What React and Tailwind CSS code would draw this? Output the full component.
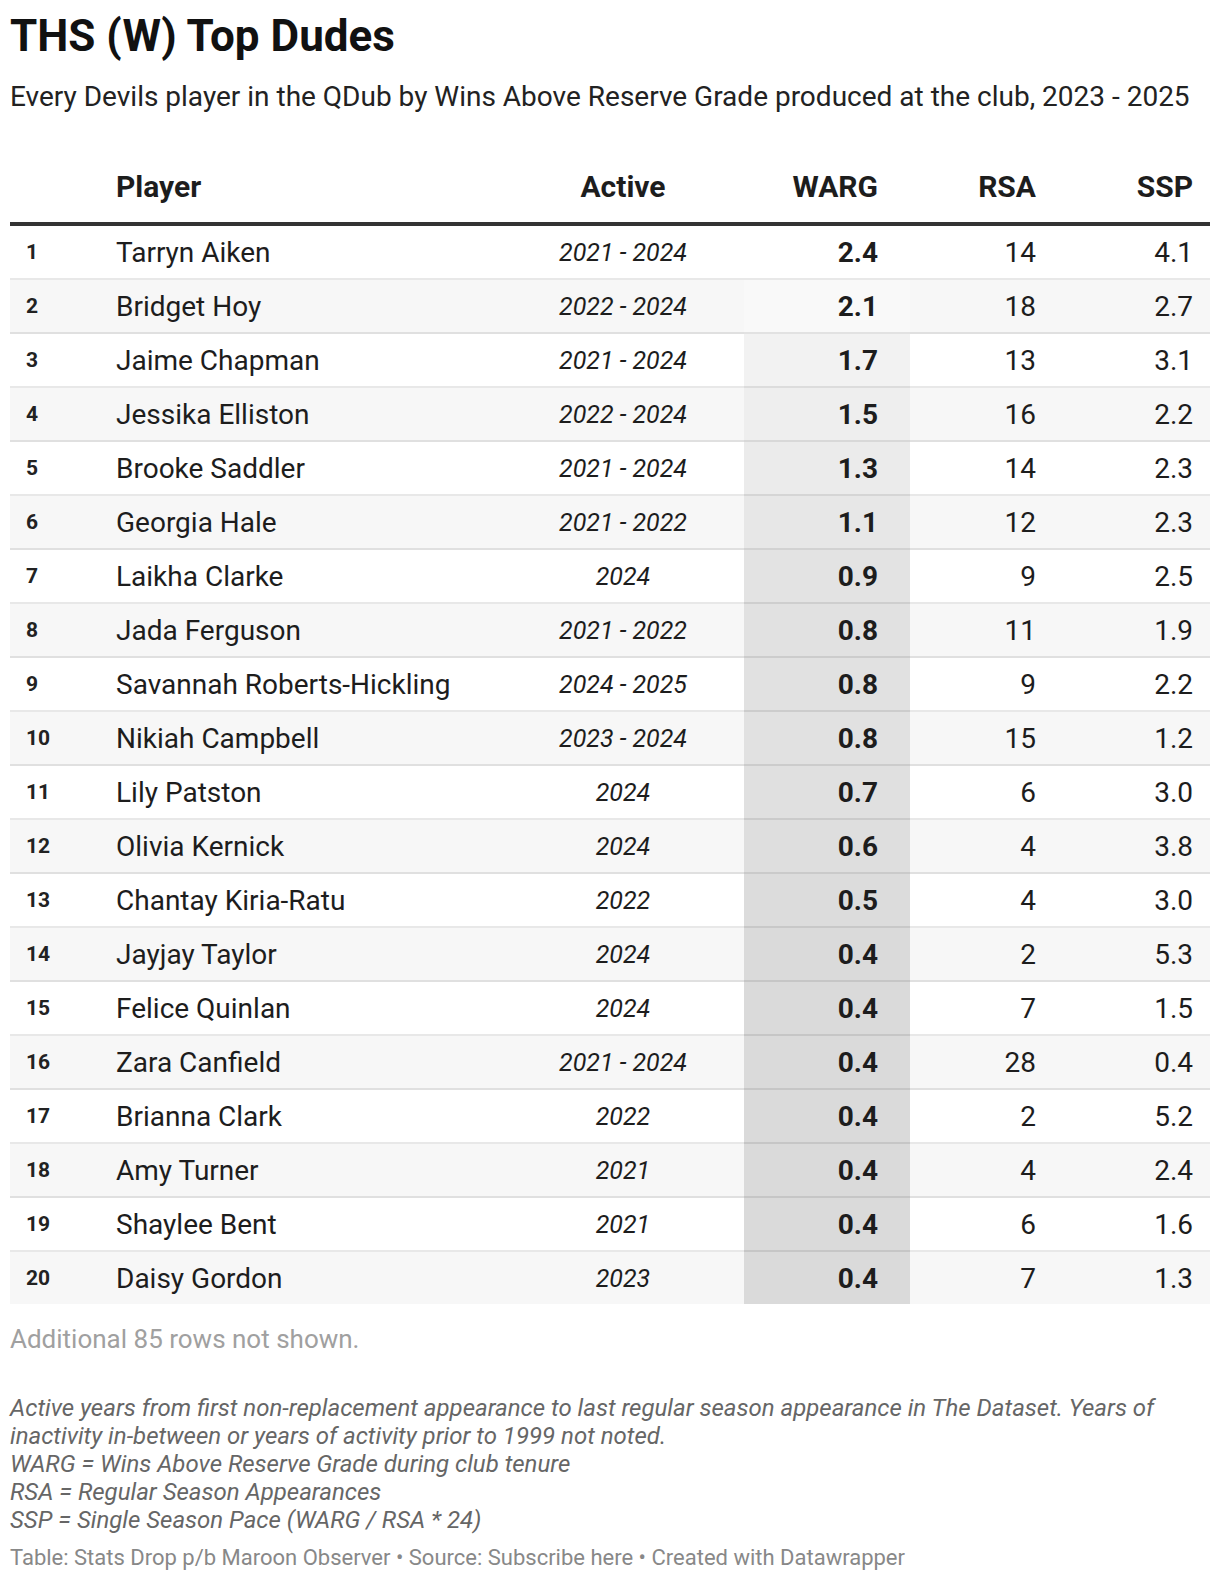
import React from "react";

const players = [
  ["Tarryn Aiken", "2021 - 2024", 2.4, 14, "4.1"],
  ["Bridget Hoy", "2022 - 2024", 2.1, 18, "2.7"],
  ["Jaime Chapman", "2021 - 2024", 1.7, 13, "3.1"],
  ["Jessika Elliston", "2022 - 2024", 1.5, 16, "2.2"],
  ["Brooke Saddler", "2021 - 2024", 1.3, 14, "2.3"],
  ["Georgia Hale", "2021 - 2022", 1.1, 12, "2.3"],
  ["Laikha Clarke", "2024", 0.9, 9, "2.5"],
  ["Jada Ferguson", "2021 - 2022", 0.8, 11, "1.9"],
  ["Savannah Roberts-Hickling", "2024 - 2025", 0.8, 9, "2.2"],
  ["Nikiah Campbell", "2023 - 2024", 0.8, 15, "1.2"],
  ["Lily Patston", "2024", 0.7, 6, "3.0"],
  ["Olivia Kernick", "2024", 0.6, 4, "3.8"],
  ["Chantay Kiria-Ratu", "2022", 0.5, 4, "3.0"],
  ["Jayjay Taylor", "2024", 0.4, 2, "5.3"],
  ["Felice Quinlan", "2024", 0.4, 7, "1.5"],
  ["Zara Canfield", "2021 - 2024", 0.4, 28, "0.4"],
  ["Brianna Clark", "2022", 0.4, 2, "5.2"],
  ["Amy Turner", "2021", 0.4, 4, "2.4"],
  ["Shaylee Bent", "2021", 0.4, 6, "1.6"],
  ["Daisy Gordon", "2023", 0.4, 7, "1.3"],
];

// heatmap: 2.4 -> white, 0.4 -> #dadada
const shade = (v) => {
  const c = Math.round(218 + ((v - 0.4) / 2.0) * 37);
  return `rgb(${c},${c},${c})`;
};

const cols = "grid grid-cols-[96px_396px_242px_166px_143px_157px]";

const App = () => {
  return (
    <div className="w-[1220px] bg-white px-[10px] pt-[10px] pb-[10px] font-[Roboto,sans-serif] text-[#1d1d1d]">
      <h1 className="text-[44px] leading-[52px] font-bold text-[#111]">THS (W) Top Dudes</h1>
      <p className="mt-[19px] text-[28px] leading-[32px] text-[#222]">
        Every Devils player in the QDub by Wins Above Reserve Grade produced at the club, 2023 - 2025
      </p>

      <div className="mt-[37px]">
        {/* header */}
        <div className={`${cols} h-[76px] border-b-4 border-[#333] text-[30px] leading-[36px] font-bold text-[#1d1d1d]`}>
          <div />
          <div className="flex items-end pb-[17px] pl-[10px]">Player</div>
          <div className="flex items-end justify-center pb-[17px]">Active</div>
          <div className="flex items-end justify-end pb-[17px] pr-[32px]">WARG</div>
          <div className="flex items-end justify-end pb-[17px] pr-[17px]">RSA</div>
          <div className="flex items-end justify-end pb-[17px] pr-[17px]">SSP</div>
        </div>

        {/* rows */}
        {players.map(([name, active, warg, rsa, ssp], i) => {
          const last = i === players.length - 1;
          const cell = last ? "h-[52px]" : "h-[54px] border-b-2 border-black/[0.09]";
          return (
            <div key={name} className={`${cols} ${i % 2 === 1 ? "bg-[#f7f7f7]" : "bg-white"}`}>
              <div className={`${cell} flex items-center pl-[16px] pt-[2px] text-[21px] font-bold text-[#222]`}>{i + 1}</div>
              <div className={`${cell} flex items-center pl-[10px] pt-[2px] text-[28px]`}>{name}</div>
              <div className={`${cell} flex items-center justify-center pt-[2px] text-[25px] italic`}>{active}</div>
              <div
                className={`${cell} flex items-center justify-end pr-[32px] pt-[2px] text-[28px] font-bold`}
                style={{ backgroundColor: shade(warg) }}
              >
                {warg.toFixed(1)}
              </div>
              <div className={`${cell} flex items-center justify-end pr-[17px] pt-[2px] text-[28px]`}>{rsa}</div>
              <div className={`${cell} flex items-center justify-end pr-[17px] pt-[2px] text-[28px]`}>{ssp}</div>
            </div>
          );
        })}
      </div>

      <p className="mt-[19px] text-[26px] leading-[32px] text-[#a0a0a0]">Additional 85 rows not shown.</p>

      <div className="mt-[39px] text-[24px] leading-[28px] italic text-[#666]">
        <p>
          Active years from first non-replacement appearance to last regular season appearance in The Dataset. Years of
          inactivity in-between or years of activity prior to 1999 not noted.
        </p>
        <p>WARG = Wins Above Reserve Grade during club tenure</p>
        <p>RSA = Regular Season Appearances</p>
        <p>SSP = Single Season Pace (WARG / RSA * 24)</p>
      </div>

      <p className="mt-[10px] text-[22px] leading-[28px] text-[#888]">
        Table: Stats Drop p/b Maroon Observer • Source: Subscribe here • Created with Datawrapper
      </p>
    </div>
  );
};

export default App;
